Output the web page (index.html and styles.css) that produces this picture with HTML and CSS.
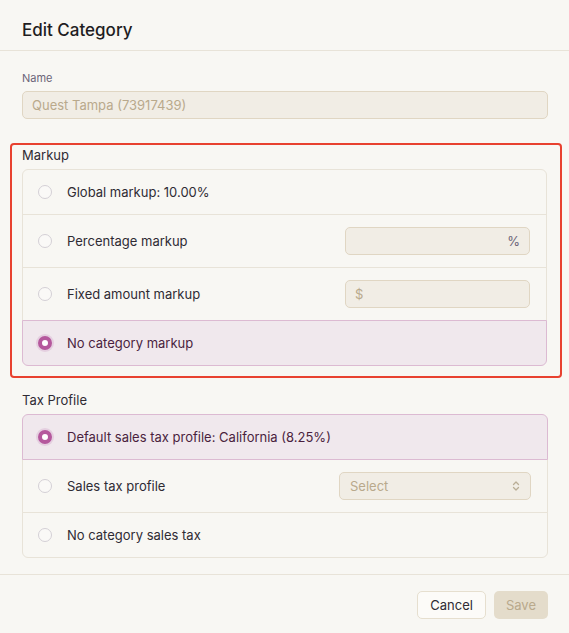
FILE: index.html
```html
<!DOCTYPE html>
<html lang="en">
<head>
  <meta charset="UTF-8">
  <meta name="viewport" content="width=device-width, initial-scale=1.0">
  <title>Edit Category</title>
  <link rel="stylesheet" href="styles.css">
</head>
<body>

  <header class="modal-header">
    <h1>Edit Category</h1>
  </header>

  <div class="modal-body">
    <label class="field-label" for="name">Name</label>
    <div class="text-input disabled" id="name">Quest Tampa (73917439)</div>

    <!-- highlighted section -->
    <div class="highlight">
      <div class="group-label">Markup</div>
      <div class="option-list">
        <div class="option">
          <span class="radio"></span>
          <span class="option-text">Global markup: 10.00%</span>
        </div>
        <div class="option with-field">
          <span class="radio"></span>
          <span class="option-text">Percentage markup</span>
          <div class="text-input small suffix"><span class="unit">%</span></div>
        </div>
        <div class="option with-field">
          <span class="radio"></span>
          <span class="option-text">Fixed amount markup</span>
          <div class="text-input small"><span class="prefix">$</span></div>
        </div>
        <div class="option selected">
          <span class="radio checked"></span>
          <span class="option-text">No category markup</span>
        </div>
      </div>
    </div>

    <div class="group-label tax">Tax Profile</div>
    <div class="option-list">
      <div class="option selected">
        <span class="radio checked"></span>
        <span class="option-text">Default sales tax profile: California (8.25%)</span>
      </div>
      <div class="option with-field">
        <span class="radio"></span>
        <span class="option-text">Sales tax profile</span>
        <div class="text-input select">
          <span class="placeholder">Select</span>
          <svg width="8" height="12" viewBox="0 0 8 12" fill="none" stroke="#b9ad96" stroke-width="1.3" stroke-linecap="round" stroke-linejoin="round">
            <path d="M1.5 4.5 L4 2 L6.5 4.5"/>
            <path d="M1.5 7.5 L4 10 L6.5 7.5"/>
          </svg>
        </div>
      </div>
      <div class="option">
        <span class="radio"></span>
        <span class="option-text">No category sales tax</span>
      </div>
    </div>
  </div>

  <footer class="modal-footer">
    <button class="btn btn-cancel" type="button">Cancel</button>
    <button class="btn btn-save" type="button" disabled>Save</button>
  </footer>

</body>
</html>
```

FILE: styles.css
```css
body {
  margin: 0;
  background-color: #f8f7f3;
  font-family: Inter, "Noto Sans", sans-serif;
  font-size: 13px;
  color: #2f2b33;
}

.modal-header {
  padding: 20px 22px 10px;
  border-bottom: 1px solid #e8e3d8;
}

.modal-header h1 {
  margin: 0;
  font-size: 17px;
  line-height: 20px;
  font-weight: 500;
  color: #1f1d22;
}

.modal-body {
  padding: 20px 21px 0 22px;
}

.field-label {
  display: block;
  font-size: 11px;
  line-height: 14px;
  color: #6b6478;
  margin-bottom: 6px;
}

.text-input {
  box-sizing: border-box;
  height: 28px;
  border: 1px solid #e0d6c3;
  border-radius: 5px;
  background-color: #f1ede5;
  display: flex;
  align-items: center;
  padding: 0 9px;
  color: #b9a98c;
}

.text-input.small {
  width: 185px;
  margin-left: auto;
}

.text-input.suffix {
  justify-content: flex-end;
}

.unit {
  color: #6b6478;
}

.text-input.select {
  width: 192px;
  margin-left: auto;
  justify-content: space-between;
  padding: 0 10px 0 10px;
}

.highlight {
  margin: 24px -14px 0 -12px;
  padding: 2px 13px 10px 10px;
  border: 2px solid #e8412f;
  border-radius: 4px;
}

.group-label {
  font-size: 13px;
  line-height: 16px;
  margin-bottom: 6px;
}

.group-label.tax {
  margin-top: 14px;
  margin-bottom: 6px;
}

.option-list {
  display: flex;
  flex-direction: column;
}

.option {
  position: relative;
  display: flex;
  align-items: center;
  min-height: 44px;
  padding: 0 16px 0 15px;
  border: 1px solid #e8e3d8;
  background-color: #f8f7f3;
}

.option + .option {
  margin-top: -1px;
}

.option:first-child {
  border-radius: 6px 6px 0 0;
}

.option:last-child {
  border-radius: 0 0 6px 6px;
}

.option.with-field {
  min-height: 52px;
}

.option.selected {
  z-index: 1;
  background-color: #f0e8ed;
  border-color: #dcbad2;
  color: #4a1f3e;
}

.radio {
  box-sizing: border-box;
  flex: none;
  width: 14px;
  height: 14px;
  border-radius: 50%;
  border: 1px solid #d4d0d6;
  background-color: #faf9f7;
  margin-right: 15px;
}

.radio.checked {
  border: 4.5px solid #b5589d;
  background-color: #fff;
  box-shadow: 0 0 0 2px #e5cfe0;
}

.modal-footer {
  margin-top: 16px;
  border-top: 1px solid #e8e3d8;
  padding: 16px 21px;
  display: flex;
  justify-content: flex-end;
  gap: 8px;
}

.btn {
  height: 28px;
  border-radius: 5px;
  font-family: Inter, "Noto Sans", sans-serif;
  font-size: 13px;
  padding: 0 12px;
  cursor: pointer;
}

.btn-cancel {
  background-color: #fcfbf8;
  border: 1px solid #e6dfcf;
  color: #2f2b33;
}

.btn-save {
  background-color: #e4dccb;
  border: none;
  color: #b9a98c;
  padding: 0 12px;
}
```
